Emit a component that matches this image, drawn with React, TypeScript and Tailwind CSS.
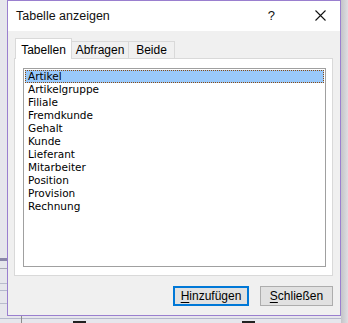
import React from "react";

const ITEMS = [
  "Artikel",
  "Artikelgruppe",
  "Filiale",
  "Fremdkunde",
  "Gehalt",
  "Kunde",
  "Lieferant",
  "Mitarbeiter",
  "Position",
  "Provision",
  "Rechnung",
];

const ui = "font-['Liberation_Sans',Arial,sans-serif]";

export default function App() {
  return (
    <div className={`relative w-[348px] h-[323px] overflow-hidden bg-[#e6e6ec] ${ui}`}>
      {/* backdrop grid lines behind the dialog */}
      <div className="absolute left-0 right-0 top-[258px] h-[3px] bg-[#8a86a8]" />
      <div className="absolute left-0 right-0 top-[268px] h-px bg-[#a9a9b4]" />
      <div className="absolute left-0 right-0 top-[283px] h-px bg-[#b9bccc]" />
      <div className="absolute left-0 right-0 top-[290px] h-px bg-[#b4b8cc]" />
      <div className="absolute left-0 right-0 top-[303px] h-px bg-[#b9bccc]" />
      <div className="absolute left-0 right-0 top-[318px] h-px bg-[#b4b8cc]" />
      <div className="absolute left-[21px] top-[316px] bottom-0 w-px bg-[#8c8c8c]" />
      <div className="absolute left-[73px] top-[321px] w-[13px] h-[2px] bg-[#222]" />
      <div className="absolute left-[242px] top-[321px] w-[13px] h-[2px] bg-[#222]" />
      <div className="absolute right-0 top-0 bottom-0 w-[7px] bg-gradient-to-r from-[#c4c4c8] to-[#dedee2]" />

      {/* dialog */}
      <div className="relative ml-[7px] w-[334px] h-[316px] border border-[#9a7fcf] bg-[#f0f0f0] flex flex-col">
        <div className="h-[30px] bg-white flex items-center pl-[8px] pr-[14px] text-[12.5px] text-[#111]">
          <span className="flex-1">Tabelle anzeigen</span>
          <span className="mr-[40px] text-[13px]">?</span>
          <svg width="11" height="11" viewBox="0 0 11 11" className="mb-px">
            <path d="M0.5 0.5 L10.5 10.5 M10.5 0.5 L0.5 10.5" stroke="#111" strokeWidth="1.1" />
          </svg>
        </div>

        <div className="flex-1 flex flex-col pl-[6px] pt-[7px]">
          {/* tabs */}
          <div className="flex items-end h-[20px] ml-px text-[12px] text-black">
            <div className="relative z-10 -mb-px h-[21px] w-[57px] bg-white border-l border-t border-r border-[#d9d9d9] text-center pt-[2px]">
              Tabellen
            </div>
            <div className="h-[17px] w-[57px] border-t border-r border-[#d9d9d9] text-center leading-[17px]">
              Abfragen
            </div>
            <div className="h-[17px] w-[46px] border-t border-r border-[#d9d9d9] text-center leading-[17px]">
              Beide
            </div>
          </div>

          {/* tab panel */}
          <div className="w-[319px] h-[218px] bg-white border border-[#d9d9d9] pl-[8px] pt-[9px]">
            <div className="w-[303px] h-[199px] border border-[#a0a0a0] p-px font-['DejaVu_Sans',sans-serif] text-[10.5px] text-black">
              {ITEMS.map((it, i) => (
                <div
                  key={it}
                  className={
                    i === 0
                      ? "h-[13px] leading-[11px] pl-[2px] bg-[#99c9fb] border border-dotted border-[#8a4a10]"
                      : "h-[13px] leading-[13px] pl-[3px]"
                  }
                >
                  {it}
                </div>
              ))}
            </div>
          </div>

          {/* buttons */}
          <div className="flex justify-end gap-[11px] mt-[10px] pr-[7px] text-[12px] text-black">
            <button className="h-[20px] w-[76px] bg-[#e1e1e1] border-2 border-[#0078d7] leading-[16px]">
              <span className="underline underline-offset-2">H</span>inzufügen
            </button>
            <button className="h-[20px] w-[73px] bg-[#e1e1e1] border border-[#adadad] leading-[18px]">
              <span className="underline underline-offset-2">S</span>chließen
            </button>
          </div>
        </div>
      </div>
    </div>
  );
}
